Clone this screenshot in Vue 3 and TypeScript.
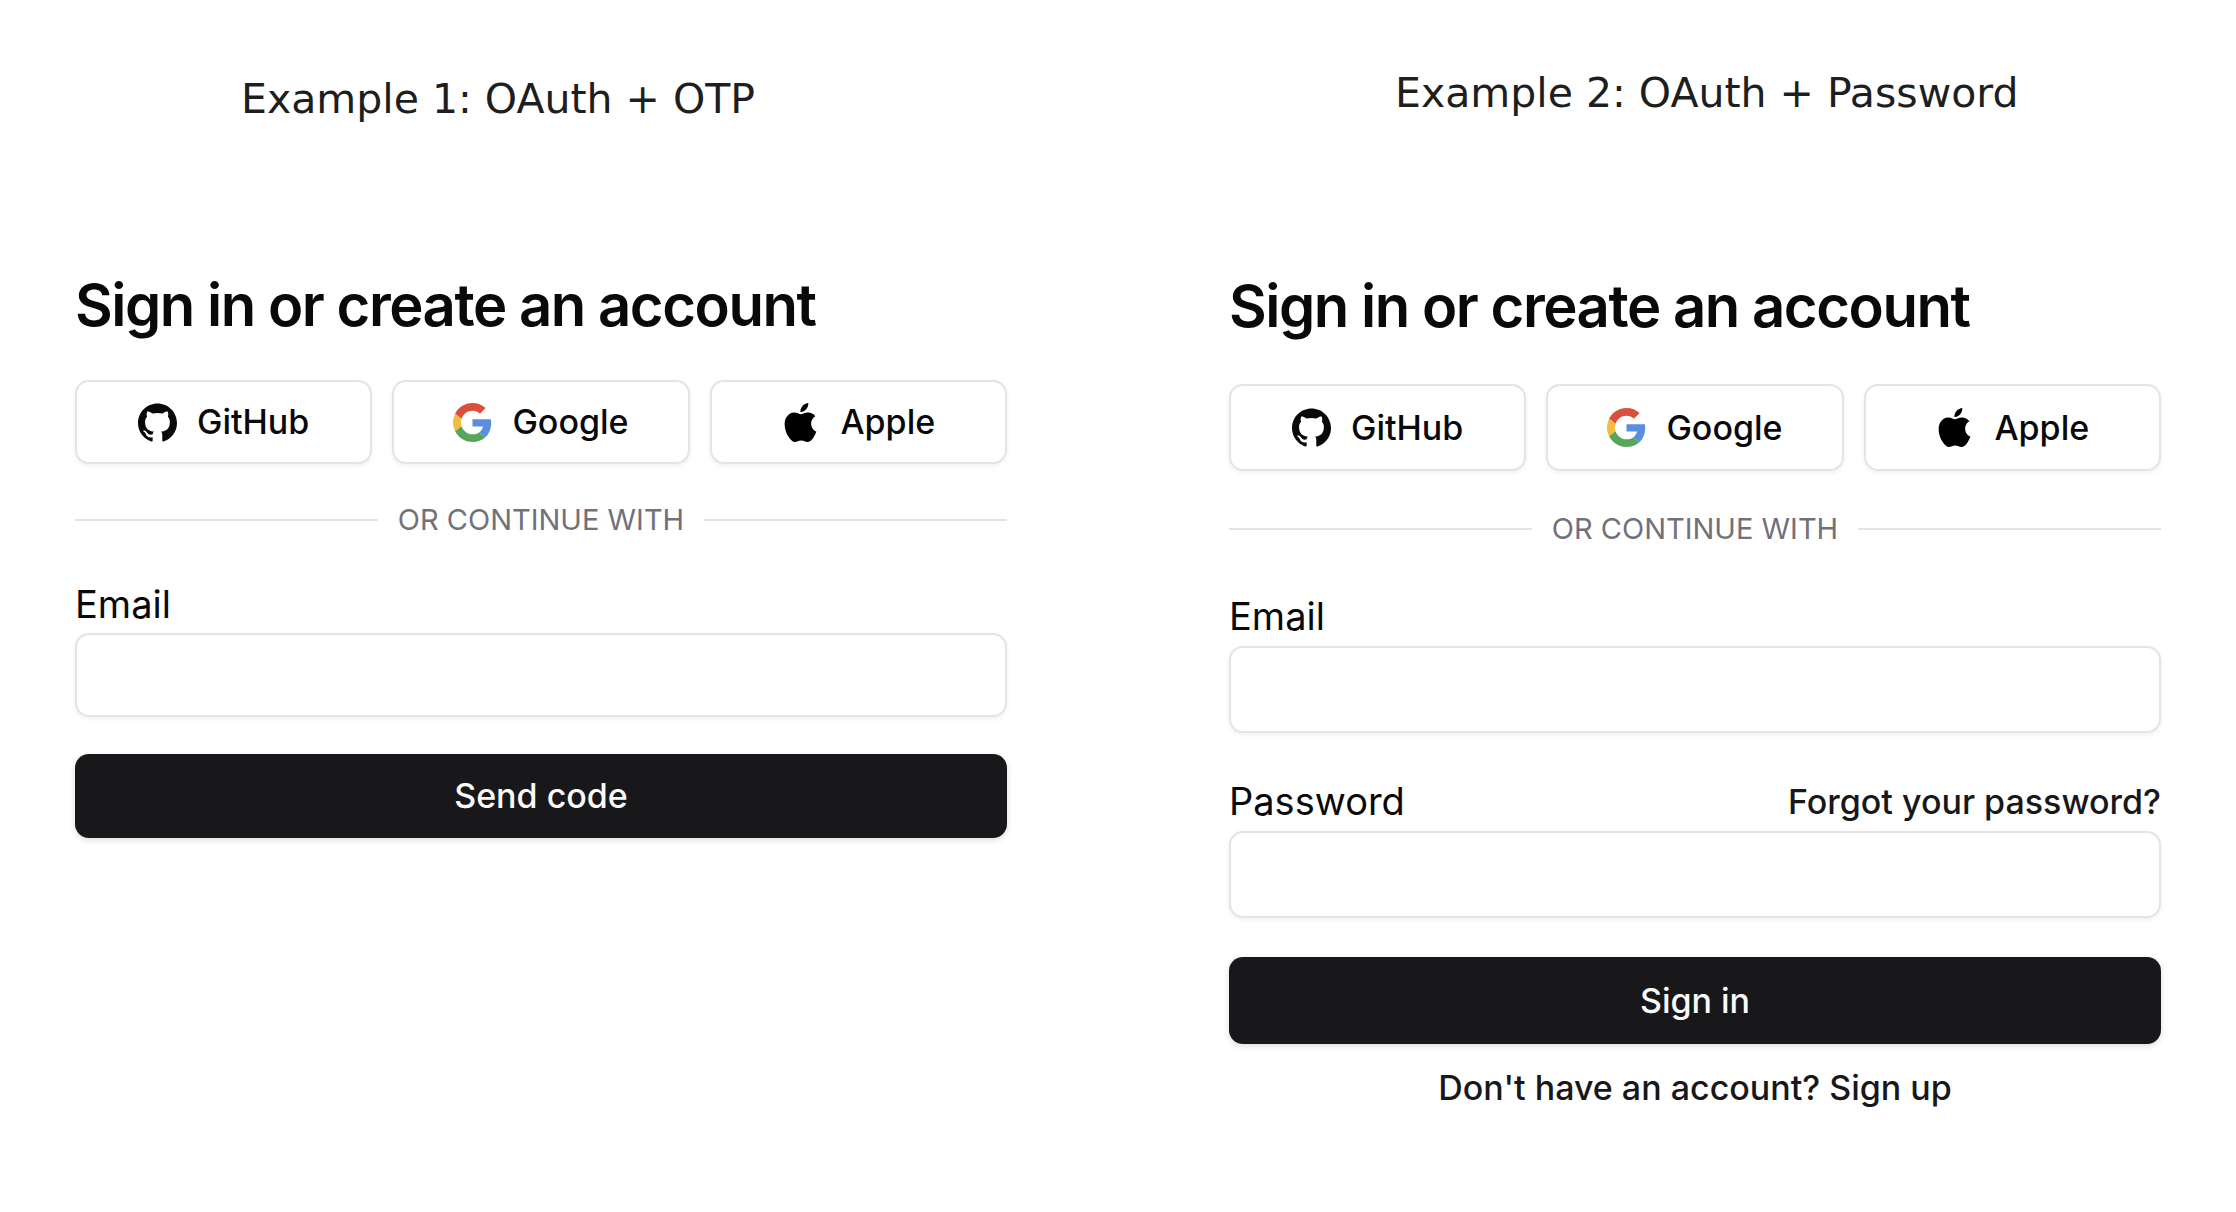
<script setup lang="ts">
import { ref } from 'vue'

interface Field {
  id: string
  label: string
  type: 'email' | 'password'
  hint?: string
}

interface Example {
  name: string
  caption: string
  fields: Field[]
  submit: string
  footer?: string
}

const providers = ['GitHub', 'Google', 'Apple'] as const

const examples: Example[] = [
  {
    name: 'otp',
    caption: 'Example 1: OAuth + OTP',
    fields: [{ id: 'otp-email', label: 'Email', type: 'email' }],
    submit: 'Send code',
  },
  {
    name: 'password',
    caption: 'Example 2: OAuth + Password',
    fields: [
      { id: 'pw-email', label: 'Email', type: 'email' },
      { id: 'pw-password', label: 'Password', type: 'password', hint: 'Forgot your password?' },
    ],
    submit: 'Sign in',
    footer: "Don't have an account? Sign up",
  },
]

const values = ref<Record<string, string>>({})
</script>

<template>
  <main class="board">
    <section v-for="example in examples" :key="example.name" class="example" :class="example.name">
      <p class="caption">{{ example.caption }}</p>
      <h1 class="title">Sign in or create an account</h1>

      <div class="providers">
        <button v-for="provider in providers" :key="provider" type="button" class="provider">
          <svg v-if="provider === 'GitHub'" class="icon" viewBox="0 0 24 24" aria-hidden="true">
            <path fill="currentColor" d="M12 .297c-6.63 0-12 5.373-12 12 0 5.303 3.438 9.8 8.205 11.385.6.113.82-.258.82-.577 0-.285-.01-1.04-.015-2.04-3.338.724-4.042-1.61-4.042-1.61C4.422 18.07 3.633 17.7 3.633 17.7c-1.087-.744.084-.729.084-.729 1.205.084 1.838 1.236 1.838 1.236 1.07 1.835 2.809 1.305 3.495.998.108-.776.417-1.305.76-1.605-2.665-.3-5.466-1.332-5.466-5.93 0-1.31.465-2.38 1.235-3.22-.135-.303-.54-1.523.105-3.176 0 0 1.005-.322 3.3 1.23.96-.267 1.98-.399 3-.405 1.02.006 2.04.138 3 .405 2.28-1.552 3.285-1.23 3.285-1.23.645 1.653.24 2.873.12 3.176.765.84 1.23 1.91 1.23 3.22 0 4.61-2.805 5.625-5.475 5.92.42.36.81 1.096.81 2.22 0 1.606-.015 2.896-.015 3.286 0 .315.21.69.825.57C20.565 22.092 24 17.592 24 12.297c0-6.627-5.373-12-12-12" />
          </svg>
          <svg v-else-if="provider === 'Google'" class="icon" viewBox="0 0 48 48" aria-hidden="true">
            <path fill="#db4f3f" d="M24 9.5c3.54 0 6.71 1.22 9.21 3.6l6.85-6.85C35.9 2.38 30.47 0 24 0 14.62 0 6.51 5.38 2.56 13.22l7.98 6.19C12.43 13.72 17.74 9.5 24 9.5z" />
            <path fill="#5a8ede" d="M46.98 24.55c0-1.57-.15-3.09-.38-4.55H24v9.02h12.94c-.58 2.96-2.26 5.48-4.78 7.18l7.73 6c4.51-4.18 7.09-10.36 7.09-17.65z" />
            <path fill="#f5bd3f" d="M10.53 28.59c-.48-1.45-.76-2.99-.76-4.59s.27-3.14.76-4.59l-7.98-6.19C.92 16.46 0 20.12 0 24c0 3.88.92 7.54 2.56 10.78l7.97-6.19z" />
            <path fill="#58a65d" d="M24 48c6.48 0 11.93-2.13 15.89-5.81l-7.73-6c-2.15 1.45-4.92 2.3-8.16 2.3-6.26 0-11.57-4.22-13.47-9.91l-7.98 6.19C6.51 42.62 14.62 48 24 48z" />
          </svg>
          <svg v-else class="icon" viewBox="0 0 24 24" aria-hidden="true">
            <path fill="#000" d="M12.152 6.896c-.948 0-2.415-1.078-3.96-1.04-2.04.027-3.91 1.183-4.961 3.014-2.117 3.675-.546 9.103 1.519 12.09 1.013 1.454 2.208 3.09 3.792 3.039 1.52-.065 2.09-.987 3.935-.987 1.831 0 2.35.987 3.96.948 1.637-.026 2.676-1.48 3.676-2.948 1.156-1.688 1.636-3.325 1.662-3.415-.039-.013-3.182-1.221-3.22-4.857-.026-3.04 2.48-4.494 2.597-4.559-1.429-2.09-3.623-2.324-4.39-2.376-2-.156-3.675 1.09-4.61 1.09zM15.53 3.83c.843-1.012 1.4-2.427 1.245-3.83-1.207.052-2.662.805-3.532 1.818-.78.896-1.454 2.338-1.273 3.714 1.338.104 2.715-.688 3.559-1.701" />
          </svg>
          <span>{{ provider }}</span>
        </button>
      </div>

      <div class="divider">OR CONTINUE WITH</div>

      <form class="form" @submit.prevent>
        <div v-for="field in example.fields" :key="field.id" class="field">
          <div class="field-head">
            <label :for="field.id">{{ field.label }}</label>
            <a v-if="field.hint" href="#" class="link">{{ field.hint }}</a>
          </div>
          <input :id="field.id" v-model="values[field.id]" :type="field.type" class="input" />
        </div>
        <button type="submit" class="submit">{{ example.submit }}</button>
      </form>

      <a v-if="example.footer" href="#" class="link footer">{{ example.footer }}</a>
    </section>
  </main>
</template>

<style>
body {
  background: #fff;
}
</style>

<style scoped>
.board {
  display: grid;
  grid-template-columns: 1fr 1fr;
  column-gap: 222px;
  align-items: start;
  padding: 0 75px;
  font-family: Inter, "Liberation Sans", sans-serif;
  color: #09090b;
}

.example {
  --control: 84px;
  --gap: 37px;
  --label: 57px;
  display: flex;
  flex-direction: column;
  padding-top: 72px;
}

.example.password {
  --control: 87px;
  --gap: 39px;
  --label: 59px;
  padding-top: 66px;
}

.caption {
  margin: 0 0 143px 166px;
  font-family: Excalifont, Virgil, "DejaVu Sans", cursive;
  font-size: 41px;
  line-height: 54px;
  white-space: nowrap;
  color: #1e1e1e;
}

.password .caption {
  margin-bottom: 150px;
}

.title {
  margin: 0 0 39px;
  font-size: 58px;
  line-height: 72px;
  font-weight: 600;
  letter-spacing: -0.025em;
}

.password .title {
  margin-bottom: 42px;
}

.providers {
  display: grid;
  grid-template-columns: repeat(3, 1fr);
  gap: 20px;
}

.provider,
.submit {
  display: flex;
  align-items: center;
  justify-content: center;
  gap: 20px;
  box-sizing: border-box;
  height: var(--control);
  padding: 0;
  border: 2px solid #e4e4e7;
  border-radius: 14px;
  background: #fff;
  box-shadow: 0 2px 5px rgb(0 0 0 / 6%);
  color: #09090b;
  font: 500 34px/48px Inter, "Liberation Sans", sans-serif;
}

.icon {
  width: 39px;
  height: 39px;
}

.divider {
  display: flex;
  align-items: center;
  gap: 20px;
  margin: var(--gap) 0;
  font-size: 29px;
  line-height: 38px;
  color: #71717a;
}

.divider::before,
.divider::after {
  content: "";
  flex: 1;
  height: 2px;
  background: #e4e4e7;
}

.form {
  display: flex;
  flex-direction: column;
  gap: var(--gap);
}

.field-head {
  display: flex;
  justify-content: space-between;
  font-size: 38px;
  line-height: var(--label);
}

.input {
  display: block;
  box-sizing: border-box;
  width: 100%;
  height: var(--control);
  padding: 0 28px;
  border: 2px solid #e4e4e7;
  border-radius: 14px;
  background: #fff;
  box-shadow: 0 2px 5px rgb(0 0 0 / 6%);
  font: 400 34px/48px Inter, "Liberation Sans", sans-serif;
}

.submit {
  width: 100%;
  border: 0;
  background: #18181b;
  box-shadow: 0 2px 6px rgb(0 0 0 / 14%);
  color: #fafafa;
}

.link {
  font-size: 34px;
  font-weight: 500;
  color: #18181b;
  text-decoration: none;
}

.footer {
  align-self: center;
  margin-top: 19px;
  line-height: 50px;
}
</style>
